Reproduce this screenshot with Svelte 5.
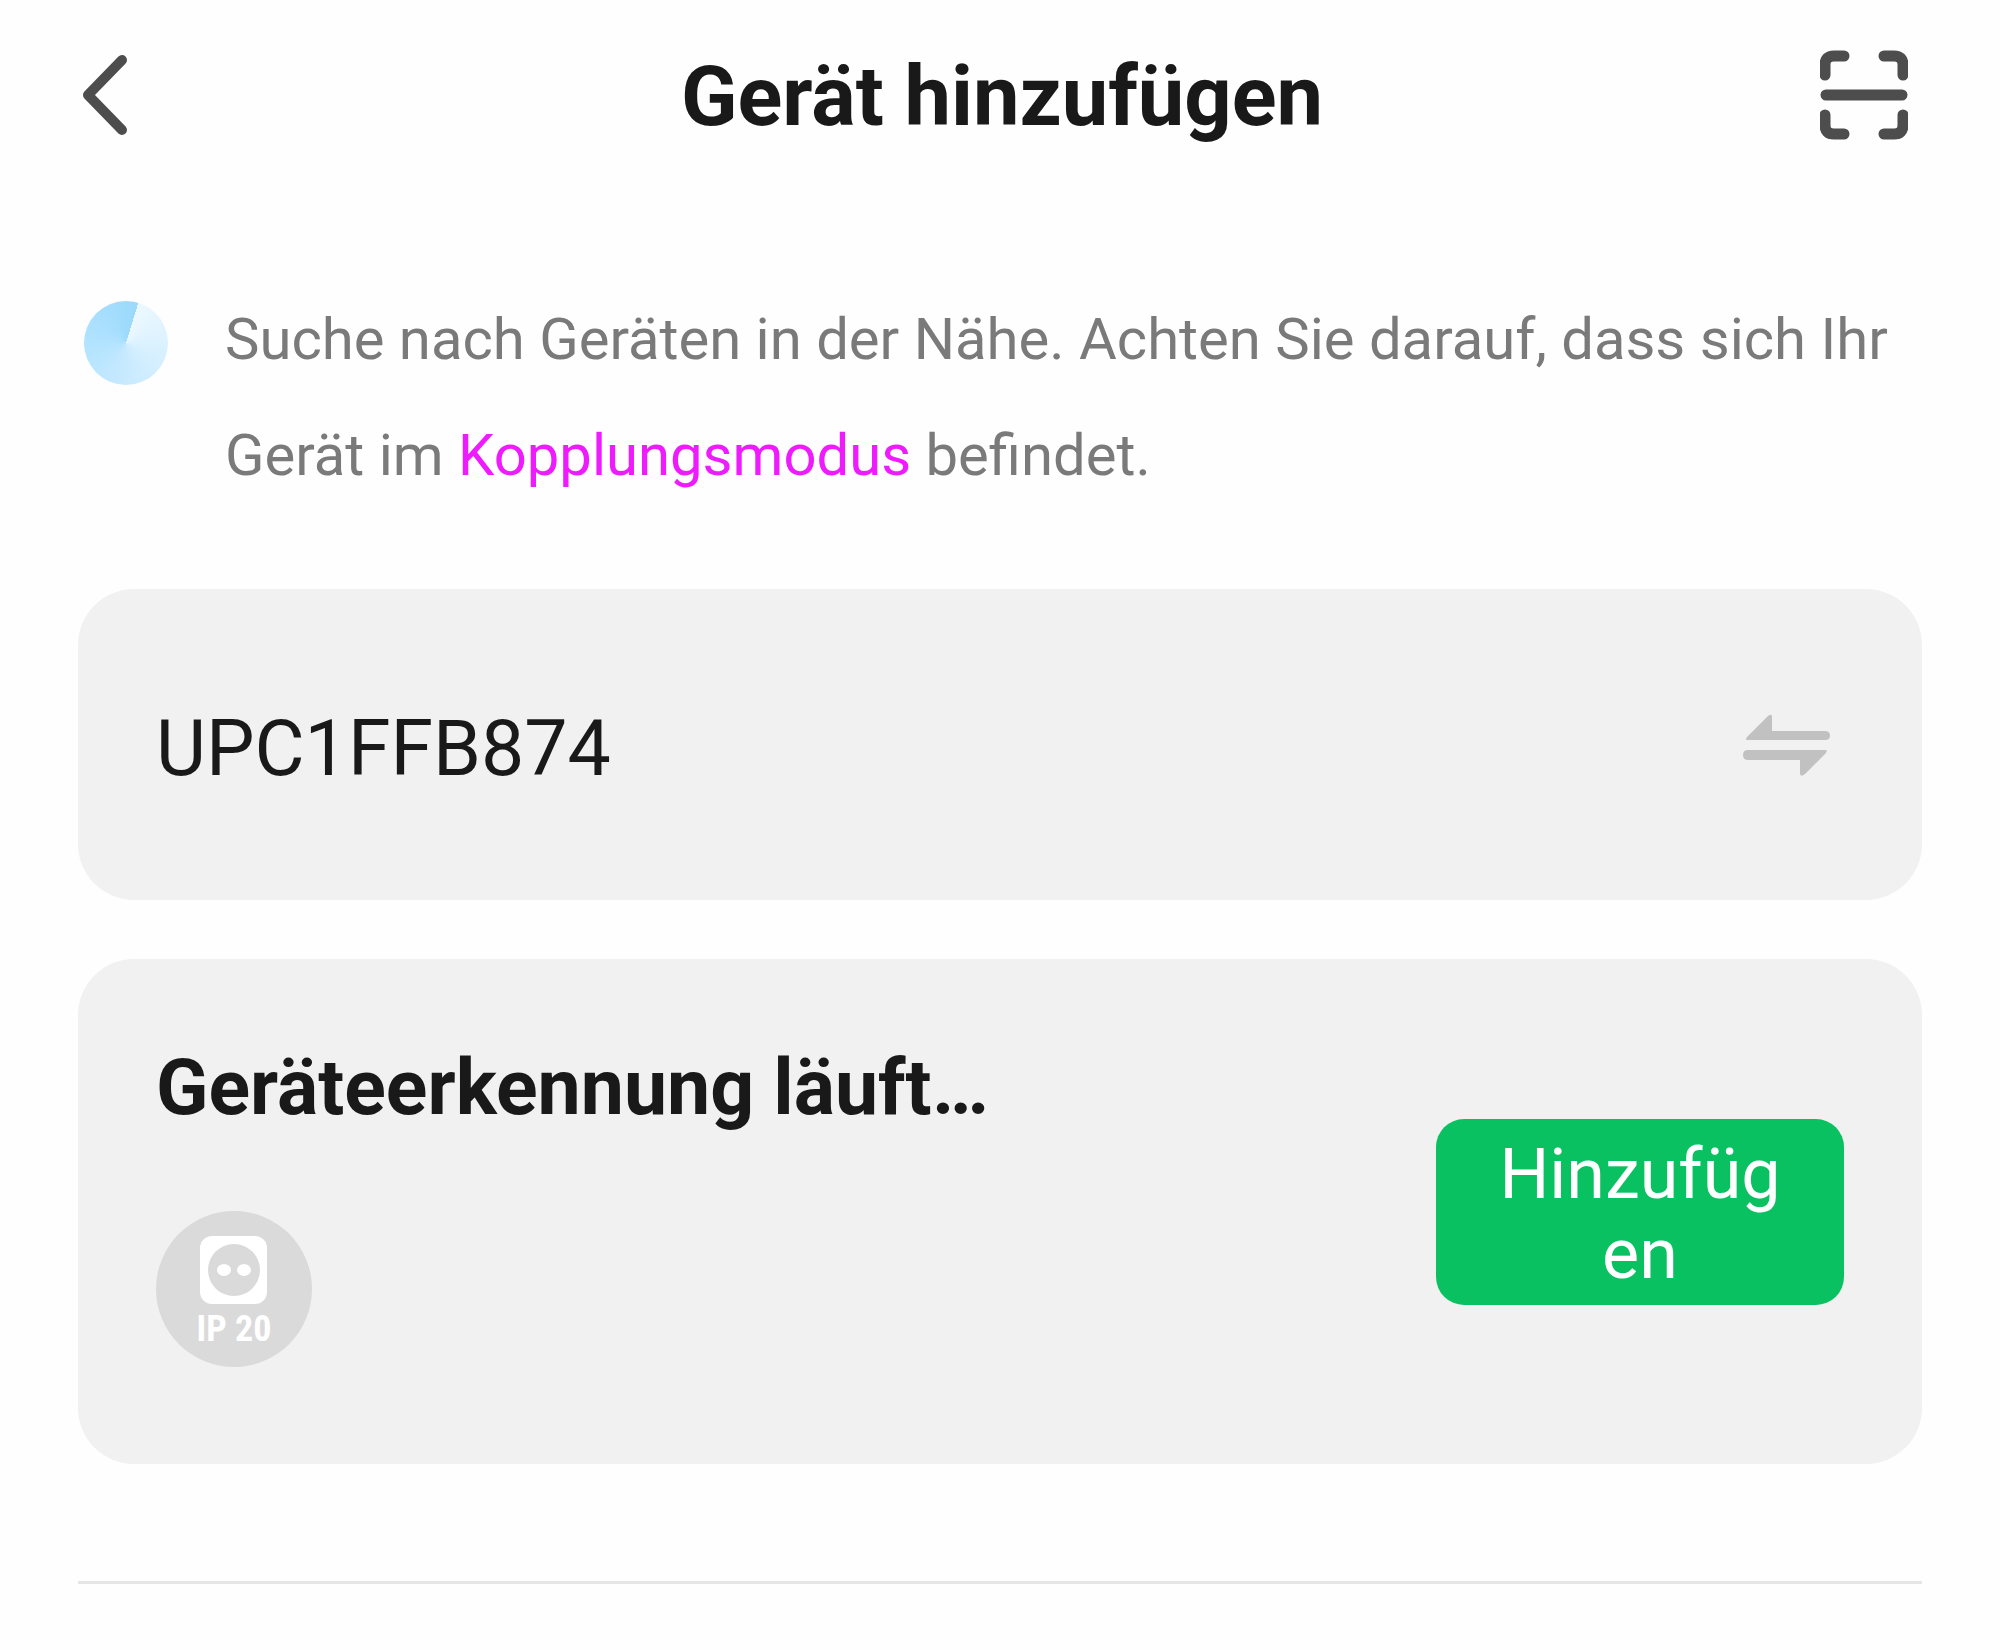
<script lang="ts">
	let network = $state('UPC1FFB874');
	let deviceType = 'IP 20';
</script>

<main class="page">
	<header class="topbar">
		<button class="icon-button back" type="button" aria-label="Zurück">
			<svg width="56" height="90" viewBox="0 0 56 90" fill="none">
				<path d="M44 10 L10 45 L44 80" stroke="#4d4d4d" stroke-width="10" stroke-linecap="round" stroke-linejoin="round" />
			</svg>
		</button>
		<h1>Gerät hinzufügen</h1>
		<button class="icon-button scan" type="button" aria-label="Code scannen">
			<svg width="88" height="90" viewBox="0 0 88 90" fill="none">
				<g stroke="#4d4d4d" stroke-width="11" stroke-linecap="round" stroke-linejoin="round">
					<path d="M5 25 V15 Q5 6 14 6 H24" />
					<path d="M64 6 H74 Q83 6 83 15 V25" />
					<path d="M5 65 V75 Q5 84 14 84 H24" />
					<path d="M64 84 H74 Q83 84 83 75 V65" />
					<path d="M6 45 H82" />
				</g>
			</svg>
		</button>
	</header>

	<section class="search">
		<div class="radar"></div>
		<p>
			Suche nach Geräten in der Nähe. Achten Sie darauf, dass sich Ihr Gerät im
			<a href="#kopplungsmodus">Kopplungsmodus</a> befindet.
		</p>
	</section>

	<section class="card network">
		<span>{network}</span>
		<button class="icon-button" type="button" aria-label="Netzwerk wechseln">
			<svg width="90" height="64" viewBox="0 0 90 64" fill="#c1c1c1">
				<path d="M5 27 Q3 27 5 24 L26 3 Q30 0 30 4 V18 H83 Q88 18 88 22.500 Q88 27 83 27 Z" />
				<path d="M83 37 Q86 37 84 40 L63 61 Q58 65 58 60 V47 H6 Q1 47 1 42 Q1 37 6 37 Z" />
			</svg>
		</button>
	</section>

	<section class="card discovery">
		<div class="device">
			<h2>Geräteerkennung läuft…</h2>
			<svg class="socket" width="156" height="156" viewBox="0 0 156 156">
				<circle cx="78" cy="78" r="78" fill="#dadada" />
				<rect x="44" y="25" width="67" height="68" rx="12" fill="#fff" />
				<circle cx="78" cy="59" r="26" fill="#dadada" />
				<ellipse cx="68" cy="59" rx="7" ry="6" fill="#fff" />
				<ellipse cx="88" cy="59" rx="7" ry="6" fill="#fff" />
				<text x="78" y="130" text-anchor="middle">{deviceType}</text>
			</svg>
		</div>
		<button class="add" type="button">Hinzufügen</button>
	</section>

	<hr />
</main>

<style>
	:global(body) {
		margin: 0;
		background: #fefefe;
	}

	.page {
		padding: 0 78px 66px;
		font-family: Roboto, 'Noto Sans', sans-serif;
		color: #191919;
	}

	.topbar {
		display: grid;
		grid-template-columns: 1fr auto 1fr;
		align-items: center;
		height: 190px;
	}

	h1,
	h2,
	p {
		margin: 0;
	}

	h1 {
		padding: 4px 0 0 4px;
		font-size: 83px;
		line-height: 96px;
		font-weight: 700;
	}

	.icon-button {
		display: flex;
		padding: 0;
		border: 0;
		background: none;
		cursor: pointer;
	}

	.scan {
		justify-self: end;
		margin-right: 14px;
	}

	.search {
		display: flex;
		gap: 57px;
		padding: 91px 0 76px 6px;
	}

	.radar {
		flex: none;
		width: 84px;
		height: 84px;
		margin-top: 20px;
		border-radius: 50%;
		background: conic-gradient(from 17deg, #ecf8ff, #c8eaff 45%, #b2e3ff 70%, #9bd9fb);
	}

	.search p {
		font-size: 58px;
		line-height: 116px;
		color: #7a7a7a;
	}

	.search a {
		color: #ee1bff;
		text-decoration: none;
	}

	.card {
		display: flex;
		align-items: center;
		justify-content: space-between;
		padding: 0 78px;
		border-radius: 56px;
		background: #f1f1f1;
	}

	.network {
		padding-right: 90px;
		font-size: 77px;
		line-height: 91px;
	}

	.network span {
		padding: 115px 0 105px;
	}

	.discovery {
		margin-top: 59px;
	}

	.device {
		padding: 84px 0 97px;
	}

	h2 {
		font-size: 77px;
		line-height: 91px;
		font-weight: 700;
	}

	.socket {
		display: block;
		margin-top: 77px;
	}

	.socket text {
		font-family: 'Liberation Sans Narrow', 'Roboto Condensed', Roboto, sans-serif;
		font-size: 36px;
		font-weight: 700;
		fill: #fff;
	}

	.add {
		width: 408px;
		padding: 15px 56px 11px;
		border: 0;
		border-radius: 28px;
		background: #09c160;
		color: #fff;
		font-family: inherit;
		font-size: 70px;
		line-height: 80px;
		word-break: break-all;
		cursor: pointer;
	}

	hr {
		height: 3px;
		margin: 117px 0 0;
		border: 0;
		background: #e6e6e6;
	}
</style>
